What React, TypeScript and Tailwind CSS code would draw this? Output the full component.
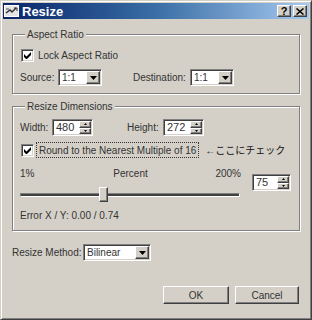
const font = "font-['Liberation_Sans','Noto_Sans_CJK_JP',sans-serif]";
const sunken =
  "bg-white border border-t-[#808080] border-l-[#808080] border-r-white border-b-white shadow-[inset_1px_1px_0_#404040,inset_-1px_-1px_0_#d4d0c8]";
const raised =
  "bg-[#d4d0c8] border border-t-white border-l-white border-r-[#404040] border-b-[#404040] shadow-[inset_-1px_-1px_0_#808080]";
const etched = "border border-[#808080] shadow-[inset_1px_1px_0_#fff,1px_1px_0_#fff]";

function Check() {
  return (
    <div className={`w-[13px] h-[13px] shrink-0 flex items-center justify-center ${sunken}`}>
      <svg width="7" height="7" viewBox="0 0 7 7">
        <path d="M0 2v3l2 2h1l4-4V0L2.5 4.5z" fill="#000" />
      </svg>
    </div>
  );
}

function DownArrow() {
  return (
    <svg width="7" height="4" viewBox="0 0 7 4">
      <path d="M0 0h7L3.5 4z" fill="#000" />
    </svg>
  );
}

function Combo({ value, w }: { value: string; w: string }) {
  return (
    <div className={`${w} h-[17px] shrink-0 flex items-center ${sunken} p-[1px]`}>
      <span className="flex-1 pl-[2px] leading-none">{value}</span>
      <div className={`w-[14px] h-full flex items-center justify-center ${raised}`}>
        <DownArrow />
      </div>
    </div>
  );
}

function Spin({ value, w }: { value: string; w: string }) {
  return (
    <div className={`${w} h-[17px] shrink-0 flex items-stretch ${sunken} p-[1px]`}>
      <span className="flex-1 pl-[2px] self-center text-[11px] leading-none">{value}</span>
      <div className="w-[12px] flex flex-col">
        <div className={`flex-1 flex items-center justify-center ${raised}`}>
          <svg width="3" height="2" viewBox="0 0 3 2"><path d="M1.5 0L3 2H0z" fill="#000" /></svg>
        </div>
        <div className={`flex-1 flex items-center justify-center ${raised}`}>
          <svg width="3" height="2" viewBox="0 0 3 2"><path d="M0 0h3L1.5 2z" fill="#000" /></svg>
        </div>
      </div>
    </div>
  );
}

function Group({ title, children, className = "" }: { title: string; children: React.ReactNode; className?: string }) {
  return (
    <fieldset className={`mx-[9px] px-[7px] ${etched} ${className}`}>
      <legend className="ml-[5px] px-[2px] bg-[#d4d0c8] leading-[13px] text-[#333]">{title}</legend>
      {children}
    </fieldset>
  );
}

export default function App() {
  return (
    <div className={`w-[312px] h-[320px] bg-[#d4d0c8] ${font} text-[10px] whitespace-nowrap text-[#333] border border-t-[#d4d0c8] border-l-[#d4d0c8] border-r-[#404040] border-b-[#404040] shadow-[inset_1px_1px_0_#fff,inset_-1px_-1px_0_#808080] p-[2px] flex flex-col`}>
      {/* Title bar */}
      <div className="h-[16px] bg-gradient-to-r from-[#0a246a] via-[#3a6ea5] to-[#a6caf0] flex items-center pl-[1px] pr-[2px]">
        <svg width="15" height="12" viewBox="0 0 15 12" className="mr-[3px]">
          <rect x="0.5" y="0.5" width="14" height="11" fill="#e4e4e4" stroke="#fff" />
          <path d="M2 8l4-3 2 2 4-4" stroke="#333" strokeWidth="1.5" fill="none" />
          <path d="M10 3h3v3" stroke="#333" strokeWidth="1" fill="none" />
          <path d="M2 4h3" stroke="#555" strokeWidth="1" />
        </svg>
        <span className="text-white font-bold text-[13px] leading-none">Resize</span>
        <div className="ml-auto flex gap-[2px]">
          <div className={`w-[14px] h-[12px] flex items-center justify-center ${raised} text-[11px] font-bold leading-none text-black`}>?</div>
          <div className={`w-[14px] h-[12px] flex items-center justify-center ${raised}`}>
            <svg width="8" height="7" viewBox="0 0 8 7">
              <path d="M0.5 0.5l7 6M7.5 0.5l-7 6" stroke="#000" strokeWidth="1.5" />
            </svg>
          </div>
        </div>
      </div>

      {/* Aspect Ratio */}
      <Group title="Aspect Ratio" className="mt-[9px] pt-[8px] pb-[7px]">
        <div className="h-[13px] flex items-center gap-[4px] pl-[1px]">
          <Check />
          <span>Lock Aspect Ratio</span>
        </div>
        <div className="mt-[7px] flex items-center">
          <span className="w-[38px]">Source:</span>
          <Combo value="1:1" w="w-[44px]" />
          <span className="ml-[31px] w-[57px]">Destination:</span>
          <Combo value="1:1" w="w-[44px]" />
        </div>
      </Group>

      {/* Resize Dimensions */}
      <Group title="Resize Dimensions" className="mt-[6px] pt-[6px] pb-[8px]">
        <div className="flex items-center">
          <span className="w-[32px]">Width:</span>
          <Spin value="480" w="w-[41px]" />
          <span className="ml-[34px] w-[36px]">Height:</span>
          <Spin value="272" w="w-[41px]" />
        </div>
        <div className="mt-[6px] h-[16px] flex items-center pl-[1px]">
          <Check />
          <span className="ml-[2px] px-[2px] h-[16px] flex items-center border border-dotted border-[#333]">
            Round to the Nearest Multiple of 16
          </span>
          <span className="ml-[6px] text-[10px] text-[#111]">←ここにチェック</span>
        </div>
        <div className="mt-[9px] flex items-start">
          <div className="w-[222px]">
            <div className="h-[13px] flex items-center justify-between pr-[1px]">
              <span className="w-[40px]">1%</span>
              <span>Percent</span>
              <span className="w-[40px] text-right">200%</span>
            </div>
            <div className="h-[21px] mt-[4px] flex items-center relative">
              <div className="w-[220px] h-[4px] border border-t-[#808080] border-l-[#808080] border-r-white border-b-white bg-[#404040]" />
              <div className={`absolute left-[79px] top-[3px] w-[9px] h-[15px] ${raised}`} />
            </div>
          </div>
          <div className="ml-[10px] mt-[7px]">
            <Spin value="75" w="w-[39px]" />
          </div>
        </div>
        <div className="mt-[4px] h-[13px] flex items-center">Error X / Y: 0.00 / 0.74</div>
      </Group>

      {/* Resize Method */}
      <div className="mt-[13px] ml-[9px] flex items-center">
        <span className="w-[71px]">Resize Method:</span>
        <Combo value="Bilinear" w="w-[68px]" />
      </div>

      <div className="mt-[25px] flex justify-end gap-[6px] pr-[10px]">
        <button className={`w-[66px] h-[18px] ${raised} shadow-[0_0_0_1px_#000,inset_-1px_-1px_0_#808080]`}>OK</button>
        <button className={`w-[64px] h-[18px] ${raised}`}>Cancel</button>
      </div>
    </div>
  );
}
